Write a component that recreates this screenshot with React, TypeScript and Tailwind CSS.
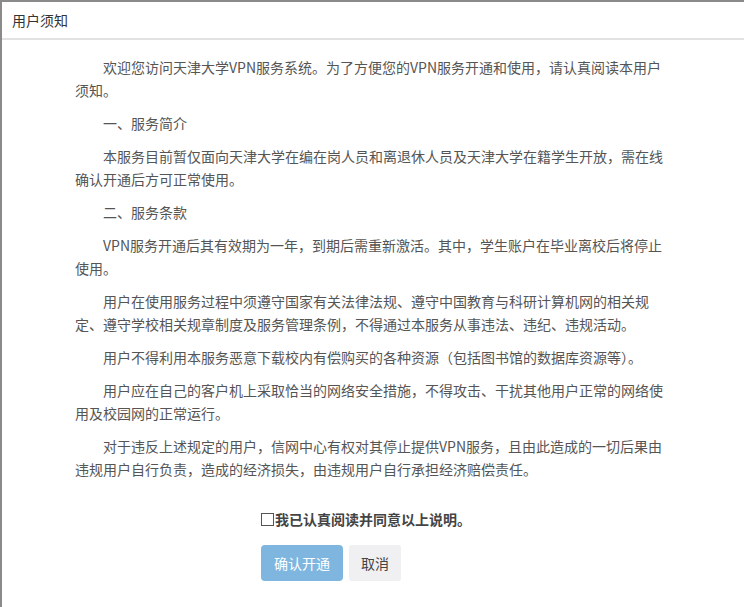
const paragraphs = [
  "欢迎您访问天津大学VPN服务系统。为了方便您的VPN服务开通和使用，请认真阅读本用户须知。",
  "一、服务简介",
  "本服务目前暂仅面向天津大学在编在岗人员和离退休人员及天津大学在籍学生开放，需在线确认开通后方可正常使用。",
  "二、服务条款",
  "VPN服务开通后其有效期为一年，到期后需重新激活。其中，学生账户在毕业离校后将停止使用。",
  "用户在使用服务过程中须遵守国家有关法律法规、遵守中国教育与科研计算机网的相关规定、遵守学校相关规章制度及服务管理条例，不得通过本服务从事违法、违纪、违规活动。",
  "用户不得利用本服务恶意下载校内有偿购买的各种资源（包括图书馆的数据库资源等）。",
  "用户应在自己的客户机上采取恰当的网络安全措施，不得攻击、干扰其他用户正常的网络使用及校园网的正常运行。",
  "对于违反上述规定的用户，信网中心有权对其停止提供VPN服务，且由此造成的一切后果由违规用户自行负责，造成的经济损失，由违规用户自行承担经济赔偿责任。",
];

export default function App() {
  return (
    <div
      className="w-[744px] h-[607px] overflow-hidden bg-white border-l-2 border-t-2 border-[#8a8a8a]"
      style={{ fontFamily: '"Microsoft YaHei", "Noto Sans CJK SC", "Noto Sans", sans-serif' }}
    >
      {/* Header */}
      <div className="h-[38px] flex items-center px-[10px] border-b-2 border-[#e2e2e2]">
        <h3 className="text-[14px] text-[#333]">用户须知</h3>
      </div>

      {/* Body */}
      <div className="w-[594px] ml-[73px] pt-[16px] text-[14px] leading-[23px] text-[#555]">
        {paragraphs.map((p) => (
          <p key={p} className="indent-[28px] mb-[10px]">
            {p}
          </p>
        ))}
      </div>

      {/* Agreement */}
      <div className="pl-[259px] pt-[18px]">
        <label className="flex items-center text-[14px] font-bold text-[#444]">
          <span className="w-[13px] h-[13px] border border-[#555] mr-[1px]" />
          我已认真阅读并同意以上说明。
        </label>
        <div className="flex gap-[6px] mt-[15px]">
          <button className="w-[82px] h-[36px] rounded-[4px] bg-[#7eb6df] text-white text-[14px]">
            确认开通
          </button>
          <button className="w-[52px] h-[36px] rounded-[3px] bg-[#f0f0f2] text-[#444] text-[14px]">
            取消
          </button>
        </div>
      </div>
    </div>
  );
}
